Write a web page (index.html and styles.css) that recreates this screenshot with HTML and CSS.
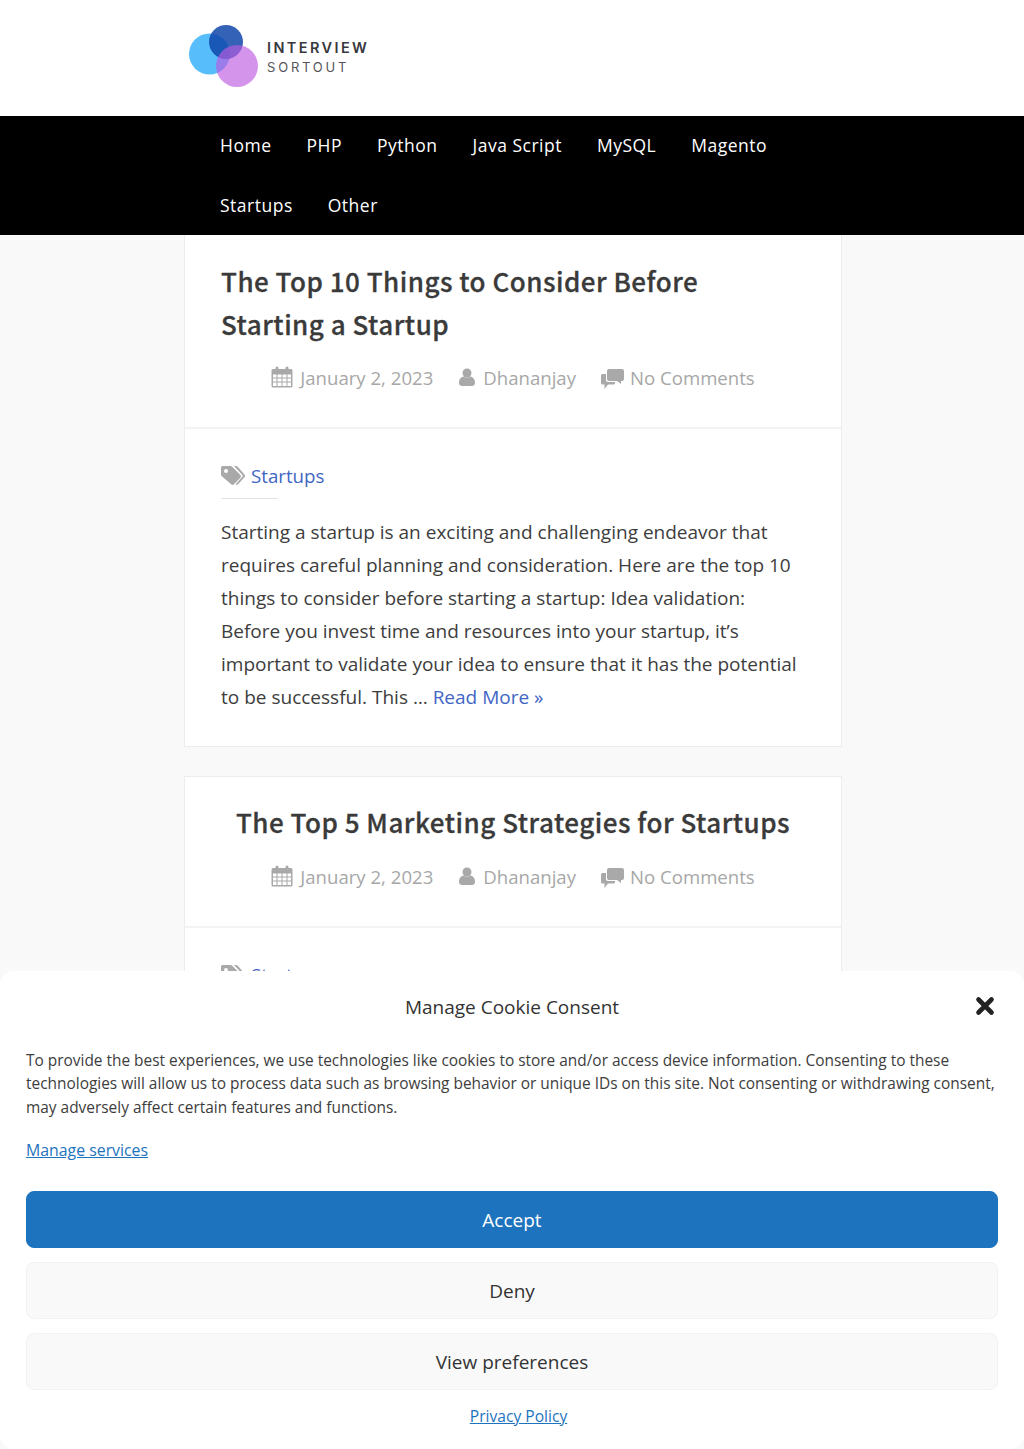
FILE: index.html
```html
<!DOCTYPE html>
<html lang="en">
<head>
<meta charset="utf-8">
<title>Interview Sortout</title>
<link rel="stylesheet" href="styles.css">
</head>
<body>
<svg class="defs" width="0" height="0" aria-hidden="true">
  <symbol id="i-cal" viewBox="0 0 22 22"><path fill-rule="evenodd" d="M2 3h2.500V2a1.500 1.500 0 0 1 3 0v1h7V2a1.500 1.500 0 0 1 3 0v1H20a1.500 1.500 0 0 1 1.500 1.500V20a1.500 1.500 0 0 1-1.500 1.500H2A1.500 1.500 0 0 1 .5 20V4.500A1.500 1.500 0 0 1 2 3zm0 5.500v3h3.500v-3zm4.500 0v3h4v-3zm5 0v3h4v-3zm5 0v3H20v-3zM2 12.500v3h3.500v-3zm4.500 0v3h4v-3zm5 0v3h4v-3zm5 0v3H20v-3zM2 16.500V20h3.500v-3.500zm4.500 0V20h4v-3.500zm5 0V20h4v-3.500zm5 0V20H20v-3.500z"/></symbol>
  <symbol id="i-user" viewBox="0 0 18 18"><circle cx="9" cy="5" r="4.500"/><path d="M1 15c0-4 2-6 4.500-6.500C7 9.800 11 9.800 12.500 8.500 15 9 17 11 17 15c0 2-1.500 3-3 3H4c-1.500 0-3-1-3-3z"/></symbol>
  <symbol id="i-chat" viewBox="0 0 23 20"><path d="M8 0h13a2 2 0 0 1 2 2v8a2 2 0 0 1-2 2h-1v3l-4-3H8a2 2 0 0 1-2-2V2a2 2 0 0 1 2-2z"/><path d="M1.500 5H5v6a2 2 0 0 0 2 2h7v1a1.500 1.500 0 0 1-1.500 1.500H7L3.500 20v-4.500h-2A1.500 1.500 0 0 1 0 14V6.500A1.500 1.500 0 0 1 1.500 5z"/></symbol>
  <symbol id="i-tags" viewBox="0 0 24 20"><path d="M1.500 0h8c.6 0 1.100.2 1.500.6l8.400 8.400a2 2 0 0 1 0 2.800l-6.500 6.500a2 2 0 0 1-2.800 0L.6 9.900C.2 9.500 0 9 0 8.400V1.500A1.500 1.500 0 0 1 1.500 0zM5 3a2 2 0 1 0 0 4 2 2 0 0 0 0-4z"/><path d="M13 0h2c.6 0 1.100.2 1.500.6l7 7.900c.7.800.7 2 0 2.800l-6.500 7c-.6.700-1.800.7-2.400 0l6.400-7a2 2 0 0 0 0-2.800z"/></symbol>
</svg>

<header class="site-header">
  <div class="brand">
    <svg class="logo" width="72" height="66" viewBox="0 0 72 66" aria-hidden="true">
      <circle cx="21.500" cy="31" r="20.500" fill="#57bdfb"/>
      <circle cx="38" cy="19" r="17" fill="#0f46aa" fill-opacity=".85"/>
      <circle cx="49" cy="43" r="21" fill="#be5ae1" fill-opacity=".65"/>
    </svg>
    <div class="brand-text">
      <span class="brand-top">INTERVIEW</span>
      <span class="brand-bottom">SORTOUT</span>
    </div>
  </div>
</header>

<nav class="main-nav">
  <ul class="nav-list">
    <li><a href="#">Home</a></li>
    <li><a href="#">PHP</a></li>
    <li><a href="#">Python</a></li>
    <li><a href="#">Java Script</a></li>
    <li><a href="#">MySQL</a></li>
    <li><a href="#">Magento</a></li>
    <li><a href="#">Startups</a></li>
    <li><a href="#">Other</a></li>
  </ul>
</nav>

<main class="content">
  <article class="card">
    <header class="card-head">
      <h2 class="title title-left">The Top 10 Things to Consider Before Starting a Startup</h2>
      <div class="meta">
        <span class="meta-item"><svg class="ic ic-cal"><use href="#i-cal"/></svg>January 2, 2023</span>
        <span class="meta-item"><svg class="ic ic-user"><use href="#i-user"/></svg>Dhananjay</span>
        <span class="meta-item"><svg class="ic ic-chat"><use href="#i-chat"/></svg>No Comments</span>
      </div>
    </header>
    <div class="card-body">
      <div class="cat"><svg class="ic ic-tags"><use href="#i-tags"/></svg><a href="#">Startups</a></div>
      <p class="excerpt">Starting a startup is an exciting and challenging endeavor that requires careful planning and consideration. Here are the top 10 things to consider before starting a startup: Idea validation: Before you invest time and resources into your startup, it’s important to validate your idea to ensure that it has the potential to be successful. This … <a href="#">Read More »</a></p>
    </div>
  </article>

  <article class="card card-second">
    <header class="card-head card-head-second">
      <h2 class="title">The Top 5 Marketing Strategies for Startups</h2>
      <div class="meta">
        <span class="meta-item"><svg class="ic ic-cal"><use href="#i-cal"/></svg>January 2, 2023</span>
        <span class="meta-item"><svg class="ic ic-user"><use href="#i-user"/></svg>Dhananjay</span>
        <span class="meta-item"><svg class="ic ic-chat"><use href="#i-chat"/></svg>No Comments</span>
      </div>
    </header>
    <div class="card-body">
      <div class="cat"><svg class="ic ic-tags"><use href="#i-tags"/></svg><a href="#">Startups</a></div>
    </div>
  </article>
</main>

<section class="cookie">
  <div class="cookie-title">Manage Cookie Consent</div>
  <svg class="cookie-close" width="20" height="20" viewBox="0 0 20 20" aria-label="Close"><path d="M3.500 3.500l13 13M16.500 3.500l-13 13" stroke="#222" stroke-width="4.600" stroke-linecap="round" fill="none"/></svg>
  <p class="cookie-text">To provide the best experiences, we use technologies like cookies to store and/or access device information. Consenting to these technologies will allow us to process data such as browsing behavior or unique IDs on this site. Not consenting or withdrawing consent, may adversely affect certain features and functions.</p>
  <a class="cookie-link" href="#">Manage services</a>
  <div class="cookie-buttons">
    <button class="btn btn-accept">Accept</button>
    <button class="btn">Deny</button>
    <button class="btn">View preferences</button>
  </div>
  <div class="cookie-foot"><a href="#">Privacy Policy</a></div>
</section>
</body>
</html>
```

FILE: styles.css
```css
* { box-sizing: border-box; }
html, body { margin: 0; padding: 0; }
body {
  width: 1024px;
  height: 1449px;
  overflow: hidden;
  background: #f9f9f9;
  font-family: "Open Sans", "Liberation Sans", sans-serif;
  color: #3b3b3b;
  position: relative;
}
a { color: #3f66c4; text-decoration: none; }
.defs { position: absolute; }

.site-header { height: 116px; background: #fff; padding: 0 0 0 184px; }
.brand { display: flex; align-items: flex-start; padding-top: 23px; }
.logo { flex: none; margin-left: 4px; }
.brand-text { display: flex; flex-direction: column; margin: 15px 0 0 7px; font-family: "Inter", sans-serif; line-height: 19px; }
.brand-top { font-size: 14.500px; font-weight: 600; letter-spacing: 2.400px; color: #38383c; }
.brand-bottom { font-size: 13px; font-weight: 400; letter-spacing: 2.800px; color: #55555a; margin-top: 1px; }

.main-nav { height: 119px; background: #000; padding: 0 184px 0 202.500px; }
.nav-list { list-style: none; margin: 0; padding: 0; display: flex; flex-wrap: wrap; }
.nav-list a { display: block; padding: 0 17.500px; height: 59.500px; line-height: 59px; color: #fff; font-family: "Open Sans", sans-serif; font-size: 17.500px; letter-spacing: .5px; }

.content { width: 658px; margin: 0 auto 0 184px; }
.card { background: #fff; border: 1px solid #ececec; border-top: 0; }
.card-second { margin-top: 29px; border-top: 1px solid #ececec; }
.card-head { height: 194px; padding: 24px 36px 0; border-bottom: 2px solid #f3f3f3; }
.card-head-second { height: 151px; padding-top: 23px; }
.title { margin: 0; font-family: "Noto Sans CJK SC", "Noto Sans", sans-serif; font-size: 26px; font-weight: 500; -webkit-text-stroke: .3px #3a3a3a; line-height: 43px; letter-spacing: .5px; color: #3a3a3a; text-align: center; white-space: nowrap; }
.title-left { text-align: left; white-space: normal; max-width: 560px; }
.meta { display: flex; justify-content: center; gap: 25px; margin-top: 17px; height: 30px; align-items: center; color: #a7a7a7; font-size: 18.600px; }
.card-head-second .meta { margin-top: 18px; }
.meta-item { display: inline-flex; align-items: center; white-space: nowrap; }
.ic { fill: #a9a9a9; flex: none; }
.ic-cal { width: 22px; height: 24px; margin-right: 7px; }
.ic-user { width: 18px; height: 18px; margin-right: 7px; }
.ic-chat { width: 23px; height: 20px; margin: 4px 6px 0 0; }
.ic-tags { width: 24px; height: 20px; margin-right: 6px; }

.card-body { padding: 31px 36px 32px 36px; font-size: 19.030px; line-height: 33px; }
.cat { display: flex; align-items: center; width: 57px; height: 39px; white-space: nowrap; border-bottom: 1px solid #e3e3e3; padding-bottom: 7px; font-size: 18.700px; margin-bottom: 17px; }
.excerpt { margin: 0; color: #3d3d3d; }

.cookie {
  position: absolute;
  left: 0;
  top: 971px;
  width: 1024px;
  height: 478px;
  background: #fff;
  border-radius: 14px;
  padding: 0 26px;
}
.cookie-title { text-align: center; font-size: 19px; line-height: 28px; padding-top: 22px; color: #333; box-sizing: content-box; height: 28px; }
.cookie-close { position: absolute; top: 25px; right: 29px; }
.cookie-text { margin: 27.500px 0 0; font-size: 15.430px; line-height: 23.500px; color: #3d3d3d; }
.cookie-link { display: block; margin-top: 18.500px; font-size: 15.850px; line-height: 24px; color: #1e73be; text-decoration: underline; }
.cookie-buttons { display: flex; flex-direction: column; gap: 14px; margin-top: 29px; }
.btn { display: block; width: 100%; height: 57px; padding: 3px 0 0; border: 1px solid #f2f2f2; border-radius: 8px; background: #f9f9f9; font: 19px/1 "Open Sans", sans-serif; color: #333; }
.btn-accept { background: #1e73be; border-color: #1e73be; color: #fff; }
.cookie-foot { text-align: center; margin: 14px 0 0 13px; font-size: 15.600px; line-height: 24px; }
.cookie-foot a { color: #1e73be; text-decoration: underline; }
```
